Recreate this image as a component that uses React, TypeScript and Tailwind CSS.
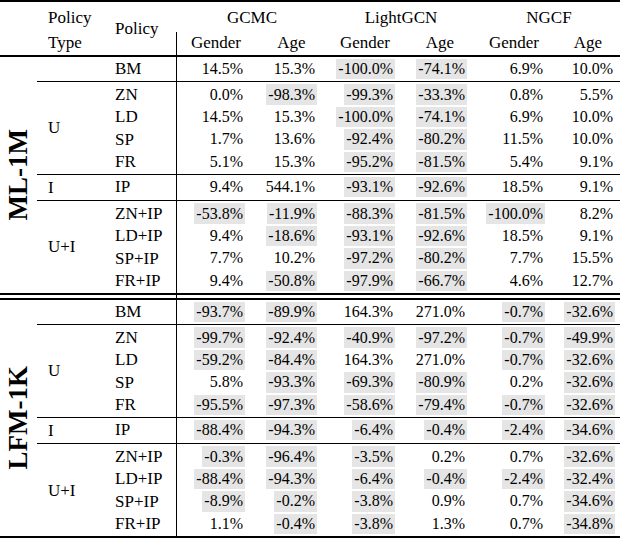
import React from 'react';

type Row = { policy: string; v: string[] };
type Group = { type: string; rows: Row[] };

const W = [78, 71, 78, 71, 78, 67];
const PR = [12, 11, 11, 10, 10, 7];
const CW = [54, 47, 56, 50, 58, 50];

const sections: { name: string; groups: Group[] }[] = [
  {
    name: 'ML-1M',
    groups: [
      { type: '', rows: [{ policy: 'BM', v: ['14.5', '15.3', '-100.0', '-74.1', '6.9', '10.0'] }] },
      {
        type: 'U',
        rows: [
          { policy: 'ZN', v: ['0.0', '-98.3', '-99.3', '-33.3', '0.8', '5.5'] },
          { policy: 'LD', v: ['14.5', '15.3', '-100.0', '-74.1', '6.9', '10.0'] },
          { policy: 'SP', v: ['1.7', '13.6', '-92.4', '-80.2', '11.5', '10.0'] },
          { policy: 'FR', v: ['5.1', '15.3', '-95.2', '-81.5', '5.4', '9.1'] },
        ],
      },
      { type: 'I', rows: [{ policy: 'IP', v: ['9.4', '544.1', '-93.1', '-92.6', '18.5', '9.1'] }] },
      {
        type: 'U+I',
        rows: [
          { policy: 'ZN+IP', v: ['-53.8', '-11.9', '-88.3', '-81.5', '-100.0', '8.2'] },
          { policy: 'LD+IP', v: ['9.4', '-18.6', '-93.1', '-92.6', '18.5', '9.1'] },
          { policy: 'SP+IP', v: ['7.7', '10.2', '-97.2', '-80.2', '7.7', '15.5'] },
          { policy: 'FR+IP', v: ['9.4', '-50.8', '-97.9', '-66.7', '4.6', '12.7'] },
        ],
      },
    ],
  },
  {
    name: 'LFM-1K',
    groups: [
      { type: '', rows: [{ policy: 'BM', v: ['-93.7', '-89.9', '164.3', '271.0', '-0.7', '-32.6'] }] },
      {
        type: 'U',
        rows: [
          { policy: 'ZN', v: ['-99.7', '-92.4', '-40.9', '-97.2', '-0.7', '-49.9'] },
          { policy: 'LD', v: ['-59.2', '-84.4', '164.3', '271.0', '-0.7', '-32.6'] },
          { policy: 'SP', v: ['5.8', '-93.3', '-69.3', '-80.9', '0.2', '-32.6'] },
          { policy: 'FR', v: ['-95.5', '-97.3', '-58.6', '-79.4', '-0.7', '-32.6'] },
        ],
      },
      { type: 'I', rows: [{ policy: 'IP', v: ['-88.4', '-94.3', '-6.4', '-0.4', '-2.4', '-34.6'] }] },
      {
        type: 'U+I',
        rows: [
          { policy: 'ZN+IP', v: ['-0.3', '-96.4', '-3.5', '0.2', '0.7', '-32.6'] },
          { policy: 'LD+IP', v: ['-88.4', '-94.3', '-6.4', '-0.4', '-2.4', '-32.4'] },
          { policy: 'SP+IP', v: ['-8.9', '-0.2', '-3.8', '0.9', '0.7', '-34.6'] },
          { policy: 'FR+IP', v: ['1.1', '-0.4', '-3.8', '1.3', '0.7', '-34.8'] },
        ],
      },
    ],
  },
];

const serif = { fontFamily: '"Liberation Serif", "Times New Roman", serif' };

function Section({ name, groups }: { name: string; groups: Group[] }) {
  return (
    <div className="flex">
      <div className="w-[37px] flex items-center justify-center">
        <span className="[writing-mode:vertical-rl] rotate-180 font-bold text-[27px] leading-none">{name}</span>
      </div>
      <div className="w-[583px]">
        {groups.map((g, gi) => (
          <div key={gi} className={`flex ${gi < groups.length - 1 ? 'border-b border-black' : ''}`}>
            <div className="w-[71px] pl-[11px] flex items-center text-[17px]">{g.type}</div>
            <div className="w-[68px] py-[1px]">
              {g.rows.map((r) => (
                <div key={r.policy} className="h-[22.4px] pl-[7px] flex items-center text-[17px]">
                  {r.policy}
                </div>
              ))}
            </div>
            <div className="w-[444px] border-l border-black py-[1px]">
              {g.rows.map((r) => (
                <div key={r.policy} className="h-[22.4px] flex">
                  {r.v.map((v, i) => (
                    <div
                      key={i}
                      className="flex items-center justify-end text-[16px]"
                      style={{ width: W[i], paddingRight: PR[i] }}
                    >
                      <span
                        className={`h-[20.5px] flex items-center px-[2px] -mr-[2px] ${
                          v.startsWith('-') ? 'bg-[#e5e5e5]' : ''
                        }`}
                      >
                        {v}%
                      </span>
                    </div>
                  ))}
                </div>
              ))}
            </div>
          </div>
        ))}
      </div>
    </div>
  );
}

export default function App() {
  return (
    <div className="w-[624px] h-[540px] bg-white text-black overflow-hidden" style={serif}>
      <div className="w-[620px]">
        {/* header */}
        <div className="flex border-t-2 border-b-2 border-black h-[57px] text-[17px] leading-none">
          <div className="w-[37px]" />
          <div className="w-[71px] pl-[11px] flex flex-col">
            <div className="h-[30px] flex items-center">Policy</div>
            <div className="h-[23px] pb-[3px] flex items-center">Type</div>
          </div>
          <div className="w-[68px] pl-[7px] flex items-center">Policy</div>
          <div className="w-[444px] flex flex-col">
            <div className="h-[30px] flex pl-[1px]">
              <div className="w-[149px] pl-[12px] pr-[11px] flex items-center justify-center">GCMC</div>
              <div className="w-[149px] pl-[11px] pr-[10px] flex items-center justify-center">LightGCN</div>
              <div className="w-[145px] pl-[10px] pr-[7px] flex items-center justify-center">NGCF</div>
            </div>
            <div className="h-[23px] pb-[3px] flex border-l border-black">
              {['Gender', 'Age', 'Gender', 'Age', 'Gender', 'Age'].map((h, i) => (
                <div key={i} className="flex justify-end items-center" style={{ width: W[i], paddingRight: PR[i] }}>
                  <div className="text-center" style={{ width: CW[i] }}>
                    {h}
                  </div>
                </div>
              ))}
            </div>
          </div>
        </div>

        <Section {...sections[0]} />

        <div className="h-[7px] border-y-2 border-black flex">
          <div className="w-[176px]" />
          <div className="border-l border-black" />
        </div>

        <div className="border-b-2 border-black">
          <Section {...sections[1]} />
        </div>
      </div>
    </div>
  );
}
